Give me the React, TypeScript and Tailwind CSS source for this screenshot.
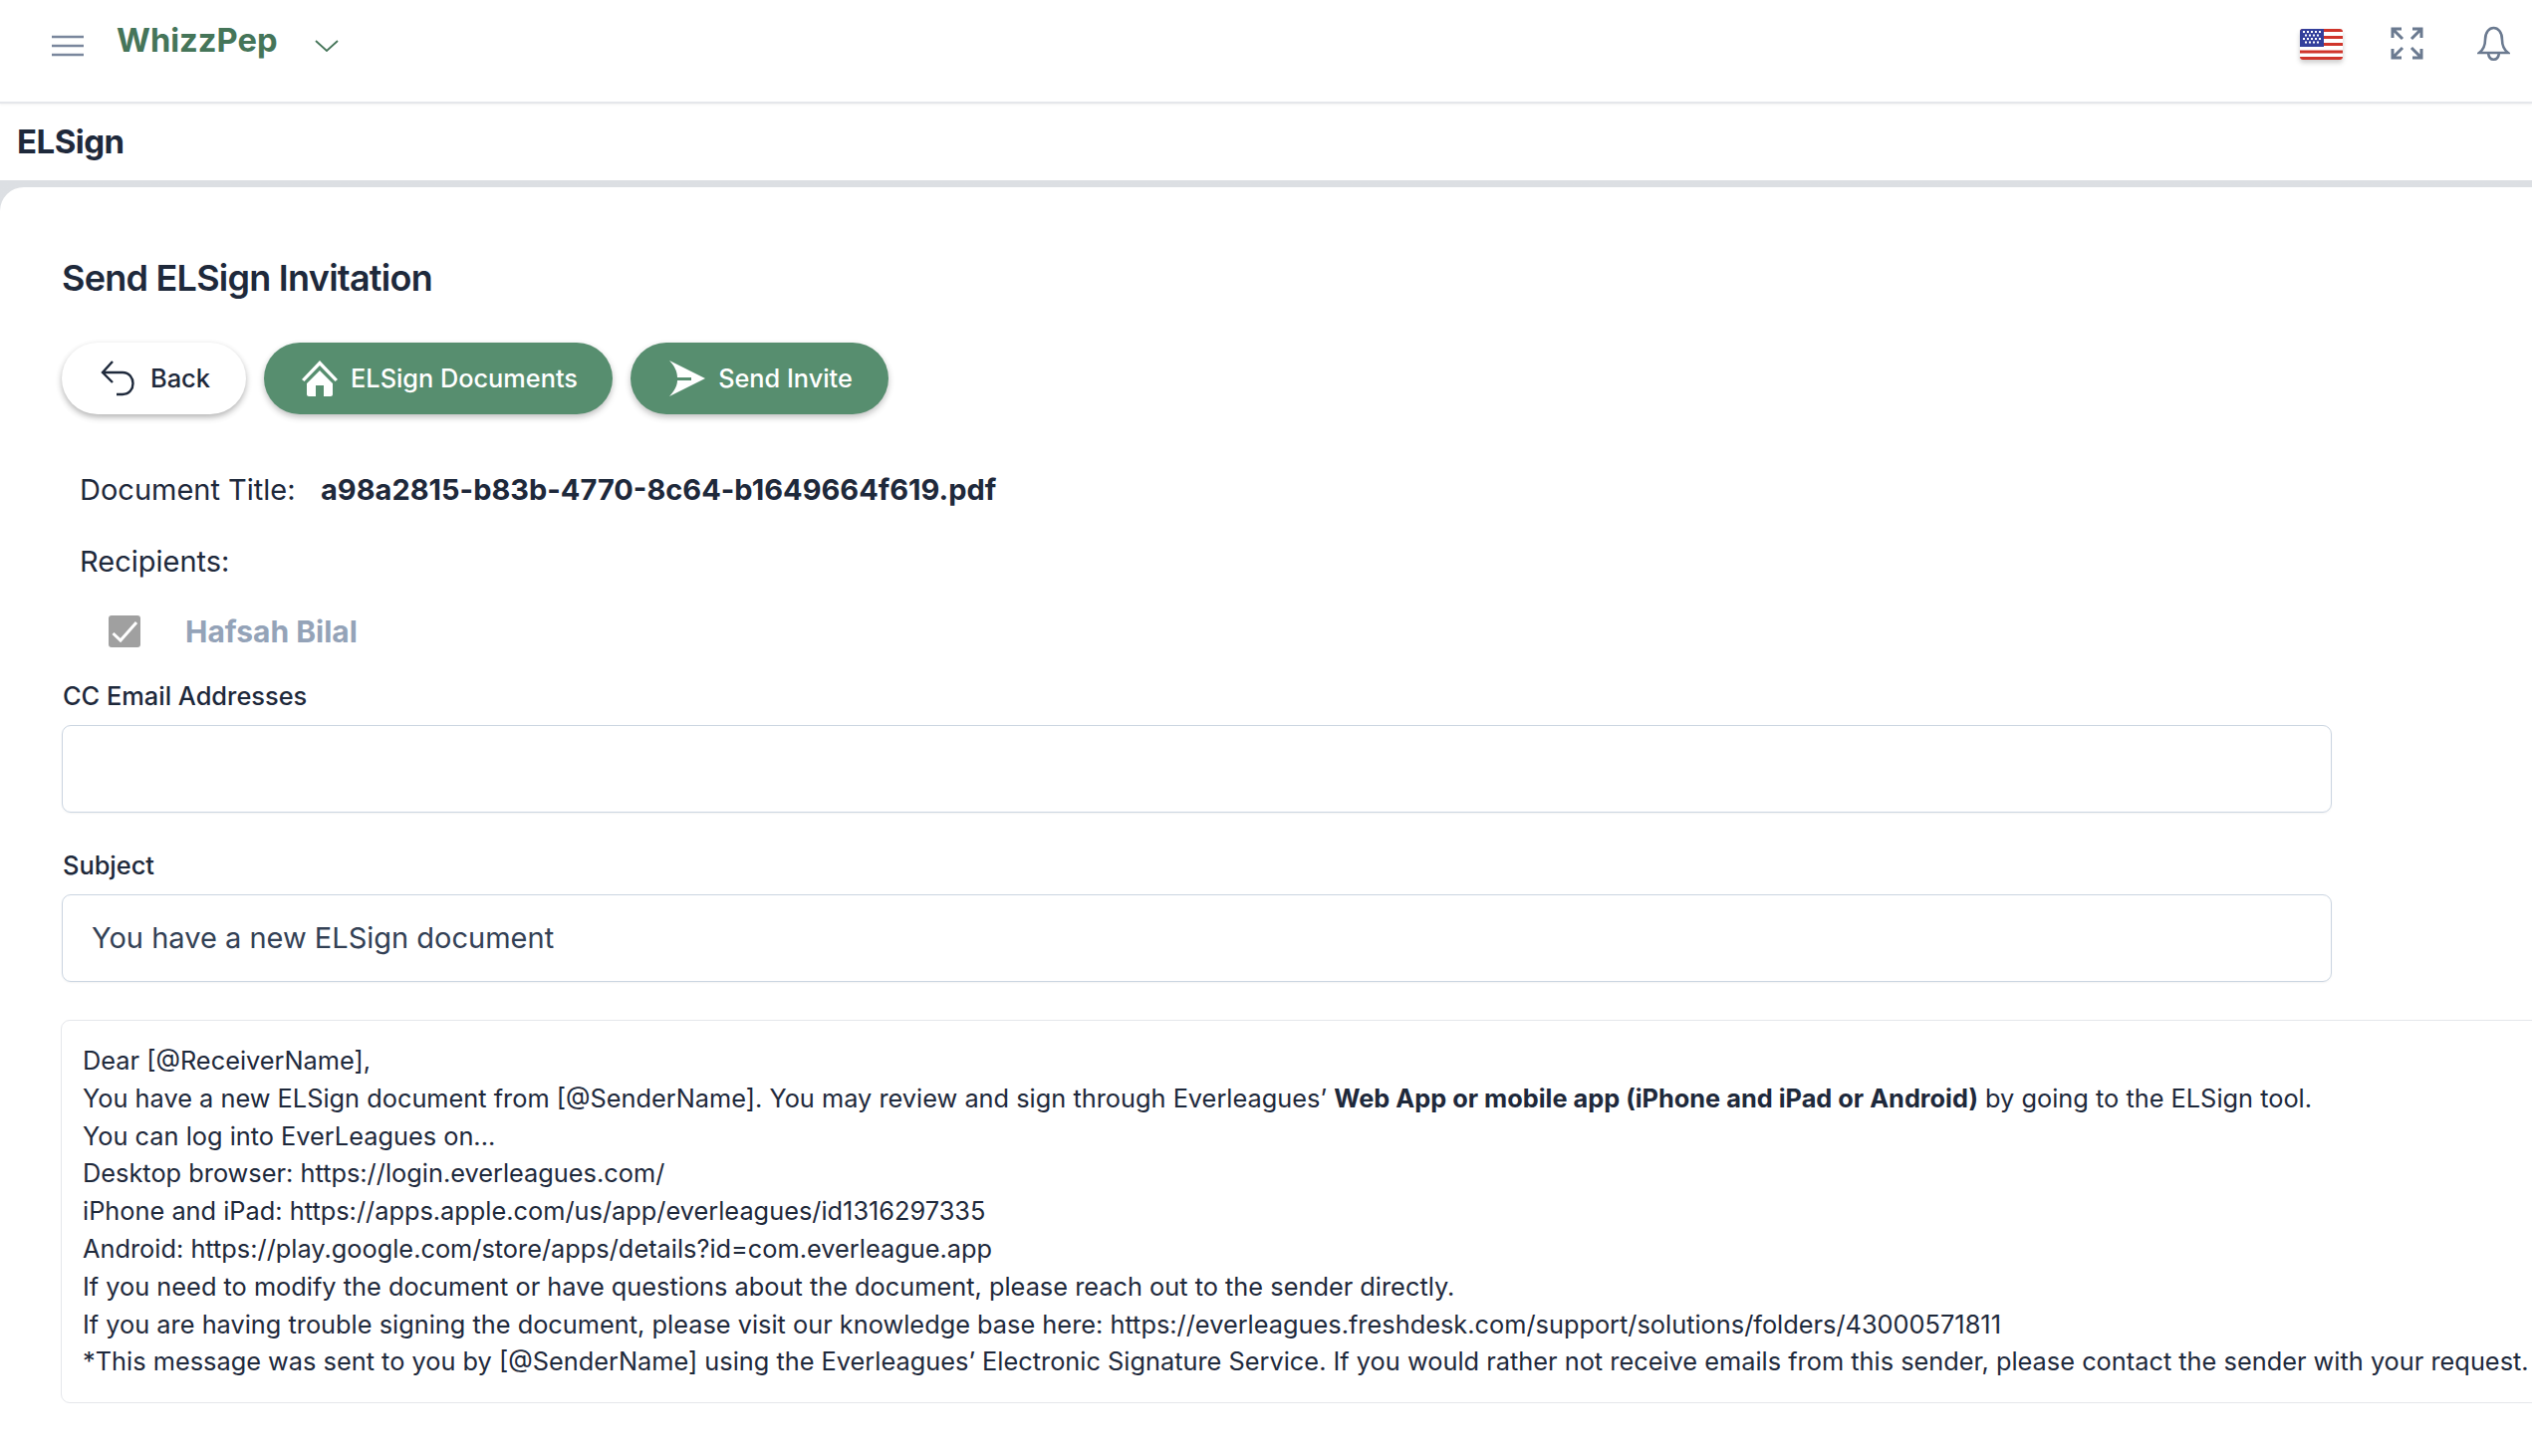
export default function App() {
  return (
    <div className="h-[1462px] w-[2542px] overflow-hidden bg-white font-['Inter',sans-serif] text-[#1e293b]">
      <Header />
      <div className="flex h-[77px] items-center pl-[17px]">
        <h1 className="text-[33px] font-bold tracking-[-0.5px]">ELSign</h1>
      </div>
      <div className="bg-gradient-to-b from-[#dcdfe3] to-[#eceff2] pt-[7px]">
        <main className="h-[1274px] rounded-tl-[24px] bg-white pl-[62px]">
          <h2 className="pt-[68px] text-[36px] leading-[46px] font-semibold tracking-[-0.75px]">Send ELSign Invitation</h2>
          <div className="mt-[42px] flex gap-[18px]">
            <button className="flex h-[72px] w-[185px] items-center justify-center gap-[14px] rounded-full bg-white pl-[3px] text-[25.5px] font-medium shadow-[0_3px_6px_rgba(0,0,0,0.3)]">
              <BackIcon />
              Back
            </button>
            <button className="flex h-[72px] w-[350px] items-center justify-center gap-[13px] rounded-full bg-[#578e6f] pl-[3px] text-[25.3px] font-medium text-white shadow-[0_3px_6px_rgba(0,0,0,0.25)]">
              <HomeIcon />
              ELSign Documents
            </button>
            <button className="flex h-[72px] w-[259px] items-center justify-center gap-[13px] rounded-full bg-[#578e6f] pl-[3px] text-[25.3px] font-medium text-white shadow-[0_3px_6px_rgba(0,0,0,0.25)]">
              <SendIcon />
              Send Invite
            </button>
          </div>
          <div className="mt-[57px] flex h-[38px] items-center pl-[18px] text-[29px]">
            <span className="w-[242px]">Document Title:</span>
            <span className="font-bold">a98a2815-b83b-4770-8c64-b1649664f619.pdf</span>
          </div>
          <div className="mt-[34px] flex h-[38px] items-center pl-[18px] text-[29px]">Recipients:</div>
          <div className="mt-[35px] flex h-[32px] items-center pl-[47px]">
            <span className="flex size-[32px] items-center justify-center rounded-[3px] bg-[#a0a0a0]">
              <svg viewBox="0 0 32 32" className="size-[32px]" fill="none" stroke="white" strokeWidth="3">
                <path d="M4.500 18l7.500 7L28 7" />
              </svg>
            </span>
            <span className="ml-[45px] text-[30px] font-bold text-[#94a3b8]">Hafsah Bilal</span>
          </div>
          <Field label="CC Email Addresses" labelTop="mt-[33px]" />
          <Field label="Subject" value="You have a new ELSign document" labelTop="mt-[37px]" />
          <Message />
        </main>
      </div>
    </div>
  );
}

function Header() {
  return (
    <header className="flex h-[104px] items-start border-b-2 border-[#e5e7eb] pt-[27px] shadow-[0_1px_2px_rgba(0,0,0,0.06)]">
      <svg viewBox="0 0 32 22" className="mt-[8px] ml-[52px] h-[22px] w-[32px]" fill="none" stroke="#7a879d" strokeWidth="2.4">
        <path d="M0 2h32M0 11h32M0 20h32" />
      </svg>
      <span className="ml-[33px] text-[32.7px] leading-[26px] font-bold text-[#457559]">WhizzPep</span>
      <svg viewBox="0 0 24 12" className="mt-[13px] ml-[37px] h-[12px] w-[24px]" fill="none" stroke="#457559" strokeWidth="1.8">
        <path d="M1 1l11 10L23 1" />
      </svg>
      <div className="ml-auto flex items-start pr-[22px]">
        <Flag />
        <svg viewBox="0 0 33 33" className="ml-[48px] size-[33px]" fill="none" stroke="#6b7a90" strokeWidth="3">
          <path d="M2 11V2h9M2 2l10 10M22 2h9v9M31 2L21 12M2 22v9h9M2 31l10-10M22 31h9v-9M31 31L21 21" />
        </svg>
        <svg viewBox="0 0 33 36" className="mt-[-1px] ml-[54px] h-[36px] w-[33px]" fill="none" stroke="#6b7a90" strokeWidth="2.6">
          <path d="M8 14c0-16 17-16 17 0c0 7 2 10 6 13H2c4-3 6-6 6-13z" />
          <path d="M11 27c1 9 10 9 11 0" />
        </svg>
      </div>
    </header>
  );
}

function Flag() {
  return (
    <svg viewBox="0 0 43 31" className="mt-[2px] h-[31px] w-[43px] rounded-[3px] shadow-[0_3px_5px_rgba(0,0,0,0.2)]">
      <rect width="43" height="31" fill="#fff" />
      <path d="M0 1.500h43M0 8.500h43M0 15.500h43M0 23h43M0 29.500h43" stroke="#d0352b" strokeWidth="3" />
      <rect width="24" height="18" fill="#34409c" />
      <path d="M3 3h18M5 6.500h14M3 10h18M5 13.500h14" stroke="#fff" strokeWidth="2" strokeDasharray="2 2" />
    </svg>
  );
}

function Field({ label, value, labelTop }: { label: string; value?: string; labelTop: string }) {
  return (
    <div className={labelTop}>
      <label className="block pl-px text-[25.4px] leading-[32px] font-medium">{label}</label>
      <div className="mt-[13px] flex h-[88px] w-[2279px] items-center rounded-[9px] border border-[#cbd5e1] pl-[29px] text-[29px] text-[#334155] shadow-[0_1px_2px_rgba(0,0,0,0.05)]">
        {value}
      </div>
    </div>
  );
}

function Message() {
  return (
    <div className="mt-[38px] -ml-px h-[385px] w-[2600px] rounded-l-[9px] border border-[#e5e7eb] pt-[21px] pl-[21px] text-[25.35px] leading-[37.8px] whitespace-nowrap">
      <p>Dear [@ReceiverName],</p>
      <p>
        You have a new ELSign document from [@SenderName]. You may review and sign through Everleagues’{" "}
        <b>Web App or mobile app (iPhone and iPad or Android)</b> by going to the ELSign tool.
      </p>
      <p>You can log into EverLeagues on...</p>
      <p>Desktop browser: https://login.everleagues.com/</p>
      <p>iPhone and iPad: https://apps.apple.com/us/app/everleagues/id1316297335</p>
      <p>Android: https://play.google.com/store/apps/details?id=com.everleague.app</p>
      <p>If you need to modify the document or have questions about the document, please reach out to the sender directly.</p>
      <p>If you are having trouble signing the document, please visit our knowledge base here: https://everleagues.freshdesk.com/support/solutions/folders/43000571811</p>
      <p>*This message was sent to you by [@SenderName] using the Everleagues’ Electronic Signature Service. If you would rather not receive emails from this sender, please contact the sender with your request.</p>
    </div>
  );
}

function BackIcon() {
  return (
    <svg viewBox="0 0 36 36" className="size-[36px]" fill="none" stroke="#1e293b" strokeWidth="2.4">
      <path d="M12 1L2 12l10 10M2 12h20c14 0 14 22 0 22h-6" />
    </svg>
  );
}

function HomeIcon() {
  return (
    <svg viewBox="0 0 36 36" className="size-[36px]" fill="white">
      <path d="M18 0L0 19l2.500 2L18 5l15.500 16 2.500-2z" />
      <path d="M18 10L5 23v11c0 1 1 2 2 2h7V25h8v11h7c1 0 2-1 2-2V23z" />
    </svg>
  );
}

function SendIcon() {
  return (
    <svg viewBox="0 0 36 36" className="size-[36px]" fill="white">
      <path d="M0 0l36 18L0 36c5-5 8-11 8-16h14v-3H8C8 11 5 5 0 0z" />
    </svg>
  );
}
